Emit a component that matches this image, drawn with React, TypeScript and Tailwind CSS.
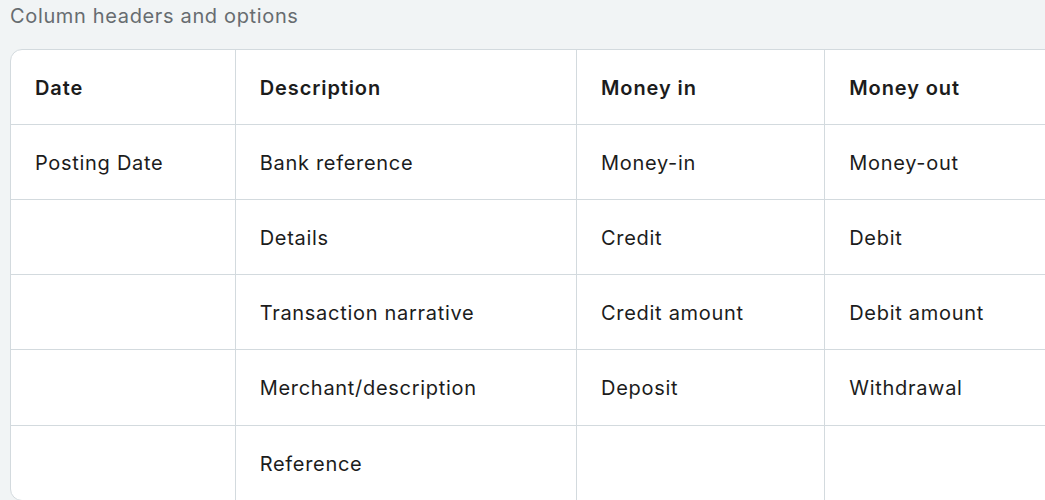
const headers = ['Date', 'Description', 'Money in', 'Money out']

const rows: string[][] = [
  ['Posting Date', 'Bank reference', 'Money-in', 'Money-out'],
  ['', 'Details', 'Credit', 'Debit'],
  ['', 'Transaction narrative', 'Credit amount', 'Debit amount'],
  ['', 'Merchant/description', 'Deposit', 'Withdrawal'],
  ['', 'Reference', '', ''],
]

const widths = ['w-[224px]', 'w-[341px]', 'w-[248px]', 'w-[248px]']

export default function App() {
  return (
    <div className="h-[500px] w-[1045px] overflow-hidden bg-[#f1f4f5] font-['Inter',sans-serif]">
      <p className="pl-[10px] pt-[2px] text-[20px] leading-[28px] tracking-[0.65px] text-[#676c70]">Column headers and options</p>
      <div className="ml-[10px] mt-[19px] w-[1064px] overflow-hidden rounded-[12px] border border-[#d3dade] bg-white">
        <table className="w-full table-fixed border-collapse text-[20px] tracking-[0.7px] text-[#1c1c1c]">
          <thead>
            <tr className="h-[74px]">
              {headers.map((h, i) => (
                <th key={h} className={`${widths[i]} px-[24px] pt-[3px] text-left font-semibold tracking-[0.9px] ${i > 0 ? 'border-l border-[#d3dade]' : ''}`}>
                  {h}
                </th>
              ))}
            </tr>
          </thead>
          <tbody>
            {rows.map((r, idx) => (
              <tr key={idx} className="h-[75.25px] border-t border-[#d3dade]">
                {r.map((c, i) => (
                  <td key={i} className={`px-[24px] pt-[2px] ${i > 0 ? 'border-l border-[#d3dade]' : ''}`}>
                    {c}
                  </td>
                ))}
              </tr>
            ))}
          </tbody>
        </table>
      </div>
    </div>
  )
}
